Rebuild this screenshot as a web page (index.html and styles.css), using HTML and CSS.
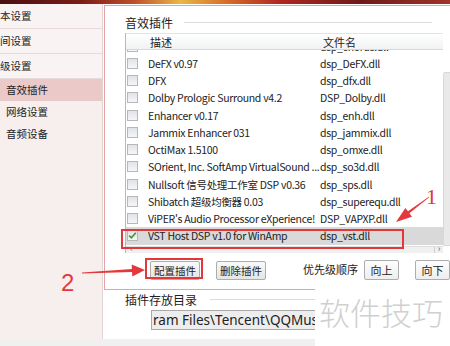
FILE: index.html
```html
<!DOCTYPE html>
<html lang="zh-CN">
<head>
<meta charset="utf-8">
<title>音效插件</title>
<link rel="stylesheet" href="styles.css">
</head>
<body>
<div class="topbar"></div>
<div class="window">
  <aside class="sidebar">
    <div class="cat">本设置</div>
    <div class="cat">间设置</div>
    <div class="cat">级设置</div>
    <div class="sub active">音效插件</div>
    <div class="sub">网络设置</div>
    <div class="sub">音频设备</div>
  </aside>
  <main class="content">
    <section class="panel">
      <div class="group-title"><span>音效插件</span><i class="rule"></i></div>
      <div class="listbox">
        <div class="listmain">
          <div class="lhead"><span class="hc1">描述</span><span class="hc2">文件名</span></div>
          <div class="lbody">
            <div class="rows">
              <div class="row"><span class="cb"></span><span class="c1"></span><span class="c2">dsp_chorus.dll</span></div>
              <div class="row"><span class="cb"></span><span class="c1">DeFX v0.97</span><span class="c2">dsp_DeFX.dll</span></div>
              <div class="row"><span class="cb"></span><span class="c1">DFX</span><span class="c2">dsp_dfx.dll</span></div>
              <div class="row"><span class="cb"></span><span class="c1">Dolby Prologic Surround v4.2</span><span class="c2">DSP_Dolby.dll</span></div>
              <div class="row"><span class="cb"></span><span class="c1">Enhancer v0.17</span><span class="c2">dsp_enh.dll</span></div>
              <div class="row"><span class="cb"></span><span class="c1">Jammix Enhancer 031</span><span class="c2">dsp_jammix.dll</span></div>
              <div class="row"><span class="cb"></span><span class="c1">OctiMax 1.5100</span><span class="c2">dsp_omxe.dll</span></div>
              <div class="row"><span class="cb"></span><span class="c1">SOrient, Inc. SoftAmp VirtualSound ...</span><span class="c2">dsp_so3d.dll</span></div>
              <div class="row"><span class="cb"></span><span class="c1">Nullsoft 信号处理工作室 DSP v0.36</span><span class="c2">dsp_sps.dll</span></div>
              <div class="row"><span class="cb"></span><span class="c1">Shibatch 超级均衡器 0.03</span><span class="c2">dsp_superequ.dll</span></div>
              <div class="row"><span class="cb"></span><span class="c1">ViPER's Audio Processor eXperience!</span><span class="c2">DSP_VAPXP.dll</span></div>
              <div class="row sel"><span class="cb on"><svg viewBox="0 0 11 11" width="11" height="11"><path d="M2.2 5.6 L4.4 7.8 L8.8 2.8" fill="none" stroke="#3c9a2e" stroke-width="1.6"/></svg></span><span class="c1">VST Host DSP v1.0 for WinAmp</span><span class="c2">dsp_vst.dll</span></div>
            </div>
          </div>
          <div class="hscroll"><span class="harrow">‹</span><span class="hright">›</span></div>
        </div>
        <div class="vscroll"><div class="thumb"></div></div>
      </div>
      <div class="btnrow">
        <button class="btn">配置插件</button>
        <button class="btn second">删除插件</button>
        <span class="prio">优先级顺序</span>
        <button class="btn sm up">向上</button>
        <button class="btn sm down">向下</button>
      </div>
    </section>
    <div class="dir-title"><span>插件存放目录</span><i class="rule"></i></div>
    <div class="dir-input">ram Files\Tencent\QQMusic</div>
  </main>
</div>
<div class="statusbar"></div>

<div class="mark-row"></div>
<div class="mark-btn"></div>
<svg class="arrows" width="450" height="346" viewBox="0 0 450 346">
  <polygon fill="#e5383c" points="428.8,196.7 408.0,211.3 405.4,207.9 396,222 412.0,216.7 409.4,213.3 429.2,197.3"/>
  <polygon fill="#e5383c" points="81.97,272.4 131.93,269.1 131.7,264.6 145,270 132.3,276.6 132.07,272.1 82.03,273.6"/>
</svg>
<span class="num num1">1</span>
<span class="num num2">2</span>
<div class="watermark">软件技巧</div>
</body>
</html>
```

FILE: styles.css
```css
html, body {
  margin: 0;
  padding: 0;
}
body {
  width: 450px;
  height: 346px;
  overflow: hidden;
  position: relative;
  background: #ffffff;
  font-family: "Noto Sans CJK SC", "Noto Sans", sans-serif;
  font-size: 11px;
  color: #222;
}
.topbar {
  height: 4px;
  background: linear-gradient(90deg, #4a1010 0%, #7a1c18 18%, #c0502a 30%, #e9b848 40%, #d8702c 50%, #b02820 62%, #6e1a1a 80%, #a03428 100%);
}
.window {
  display: flex;
  height: 335px;
}
.sidebar {
  width: 102px;
  flex: none;
  background: #f7eeee;
  border-right: 1px solid #e4d4d4;
  font-size: 10.5px;
}
.cat {
  height: 25px;
  box-sizing: border-box;
  line-height: 24px;
  border-bottom: 1px solid #e6dada;
  background: #f9f3f3;
  white-space: nowrap;
}
.sub {
  height: 22px;
  line-height: 22px;
  padding-left: 6px;
}
.sub.active {
  background: #ecc9c9;
}
.content {
  flex: 1;
  min-width: 0;
  padding-left: 1px;
}
.panel {
  margin-top: 1px;
  width: 400px;
  height: 285px;
  box-sizing: border-box;
  border: 1px solid #e3a4a4;
  border-right: none;
  padding: 8px 0 0 20px;
}
.group-title, .dir-title {
  display: flex;
  align-items: center;
  height: 16px;
  font-size: 12px;
  white-space: nowrap;
}
.group-title .rule {
  display: block;
  width: 248px;
  height: 1px;
  margin-left: 11px;
  background: #dcdcdc;
}
.listbox {
  display: flex;
  margin-top: 3px;
  height: 220px;
  border-left: 1px solid #b9b9b9;
}
.listmain {
  width: 317px;
  display: flex;
  flex-direction: column;
}
.lhead {
  height: 17px;
  flex: none;
  box-sizing: border-box;
  display: flex;
  align-items: center;
  border-top: 1px solid #e4e4e4;
  border-bottom: 1px solid #d8d8d8;
  background: linear-gradient(#ffffff, #f1f2f4);
}
.hc1 {
  width: 191px;
  box-sizing: border-box;
  padding-left: 24px;
}
.hc2 {
  padding-left: 6px;
}
.lbody {
  height: 196px;
  flex: none;
  overflow: hidden;
  font-size: 10.5px;
  letter-spacing: -0.3px;
}
.rows {
  margin-top: -12.5px;
}
.row {
  height: 17.25px;
  display: flex;
  align-items: center;
  white-space: nowrap;
}
.row.sel {
  background: #d9d9d9;
  width: 330px;
}
.cb {
  width: 11px;
  height: 11px;
  flex: none;
  box-sizing: border-box;
  margin-left: 1px;
  border: 1px solid #b7b7b7;
  background: linear-gradient(#e0e3e7, #f5f6f8);
  position: relative;
}
.cb.on svg {
  position: absolute;
  left: -1px;
  top: -1px;
}
.c1 {
  width: 172px;
  flex: none;
  margin-left: 10px;
  overflow: hidden;
}
.c2 {
  flex: none;
}
.hscroll {
  height: 7px;
  flex: none;
  box-sizing: border-box;
  border-top: 1px solid #dedede;
  background: #f0f0f0;
  display: flex;
  justify-content: space-between;
  font-size: 9px;
  line-height: 4px;
  color: #666;
  overflow: hidden;
}
.harrow {
  padding-left: 4px;
}
.hright {
  width: 8px;
  border-left: 1px solid #cfcfcf;
  text-align: center;
}
.vscroll {
  width: 20px;
  flex: none;
  display: flex;
  flex-direction: column;
}
.thumb {
  margin-top: 39px;
  height: 174px;
  box-sizing: border-box;
  border: 1px solid #d8d8d8;
  border-radius: 2px 0 0 0;
  background: #e9e9e9;
}
.btnrow {
  display: flex;
  align-items: flex-start;
  margin-top: 8px;
  margin-left: 25px;
  height: 19px;
}
.btn {
  width: 50px;
  height: 19px;
  padding: 0;
  box-sizing: border-box;
  border: 1px solid #adadad;
  border-radius: 2px;
  background: linear-gradient(#f9f9f9, #e5e5e5);
  font-family: inherit;
  font-size: 10.5px;
  color: #222;
  line-height: 16px;
}
.btn.second {
  margin-left: 16px;
}
.prio {
  margin-left: 37px;
  line-height: 16px;
  white-space: nowrap;
}
.btn.sm {
  width: 35px;
  height: 20px;
  margin-top: -1px;
  font-size: 11px;
  background: linear-gradient(#fdfdfd, #eeeeee);
}
.btn.up {
  margin-left: 6px;
}
.btn.down {
  margin-left: 16px;
}
.dir-title {
  margin-top: 1px;
  padding-left: 21px;
}
.dir-title .rule {
  display: block;
  width: 200px;
  height: 1px;
  margin-left: 13px;
  background: #dcdcdc;
}
.dir-input {
  margin-top: 3px;
  margin-left: 47px;
  width: 300px;
  height: 20px;
  box-sizing: border-box;
  border: 1px solid #a9a9a9;
  background: #ededed;
  font-family: "Noto Sans", sans-serif;
  font-size: 13.5px;
  line-height: 18px;
  padding-left: 1px;
  white-space: nowrap;
  overflow: hidden;
}
.statusbar {
  height: 7px;
  background: #f0f0f0;
}
.mark-row, .mark-btn {
  position: absolute;
  box-sizing: border-box;
  border: 2px solid #e2383b;
}
.mark-row {
  left: 121px;
  top: 229px;
  width: 283px;
  height: 20px;
}
.mark-btn {
  left: 145px;
  top: 258px;
  width: 58px;
  height: 21px;
}
.arrows {
  position: absolute;
  left: 0;
  top: 0;
}
.num {
  position: absolute;
  color: #e5383c;
}
.num1 {
  left: 426px;
  top: 184px;
  font-family: "Liberation Serif", serif;
  font-size: 22px;
}
.num2 {
  left: 61px;
  top: 269px;
  font-family: "Liberation Sans", sans-serif;
  font-size: 24px;
}
.watermark {
  position: absolute;
  left: 315px;
  top: 289px;
  width: 135px;
  height: 57px;
  box-sizing: border-box;
  padding-left: 4px;
  background: #ffffff;
  font-size: 31px;
  font-weight: 300;
  line-height: 46px;
  color: #d0d0d0;
  white-space: nowrap;
}
```
